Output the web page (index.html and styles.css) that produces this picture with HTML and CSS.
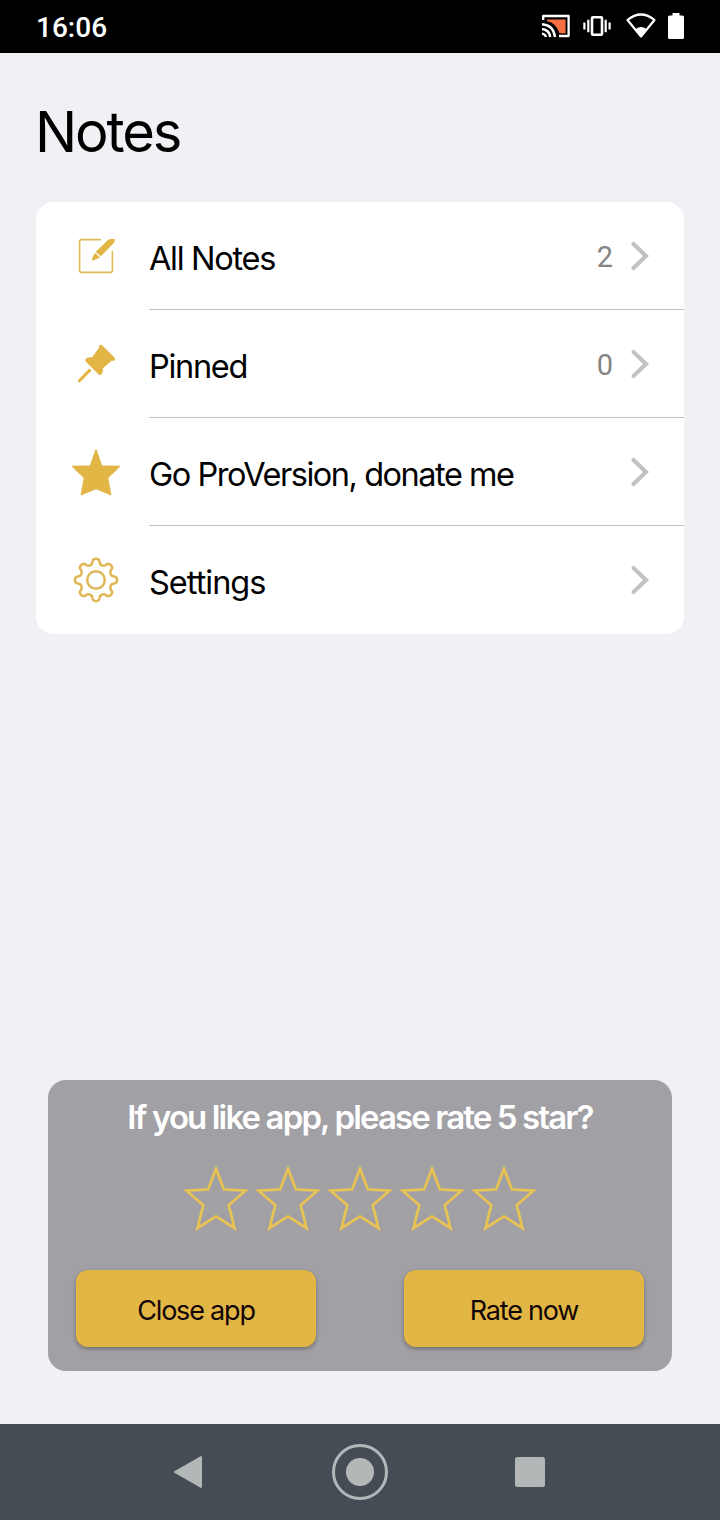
FILE: index.html
```html
<!DOCTYPE html>
<html lang="en">
<head>
<meta charset="utf-8">
<title>Notes</title>
<link rel="stylesheet" href="styles.css">
</head>
<body>
<div class="screen">
  <header class="status">
    <span class="clock">16:06</span>
    <svg class="status-icons" viewBox="540 0 150 53" fill="none">
      <path d="M543.2 20V16H568.6V36H559" stroke="#fff" stroke-width="2.3" stroke-linejoin="round"/>
      <path d="M547 19.5H565.6V33.3H559.5C557.5 27 553 22 547 21.2Z" fill="#f76f42"/>
      <path d="M542 24.2Q553.5 25 555 37M542 29Q549.5 30 550.3 37M542 33.6Q545.3 34.2 546 37" stroke="#fff" stroke-width="2.4"/>
      <rect x="592" y="17.2" width="10" height="17.6" rx="1" stroke="#fff" stroke-width="2.6"/>
      <path d="M588.3 19.8V32.2M605.7 19.8V32.2M584.4 22.5V29.5M609.6 22.5V29.5" stroke="#fff" stroke-width="2.2"/>
      <path d="M627.5 20Q641 9 654.5 20L641 36.5Z" stroke="#fff" stroke-width="2.2" stroke-linejoin="round"/>
      <path d="M635.2 29.4Q641 24.5 646.8 29.4L641 37Z" fill="#fff"/>
      <path d="M672.5 13H679.5V15.5H682.5Q684 15.5 684 17V37.5Q684 39 682.5 39H669.5Q668 39 668 37.5V17Q668 15.5 669.5 15.5H672.5Z" fill="#fff"/>
    </svg>
  </header>

  <main class="content">
    <h1 class="title">Notes</h1>
    <ul class="menu">
      <li class="item">
        <svg class="icon" viewBox="0 0 48 48">
          <path class="line thin" d="M29 7.6H9.5Q7.6 7.6 7.6 9.5V38.5Q7.6 40.4 9.5 40.4H38.5Q40.4 40.4 40.4 38.5V18.8"/>
          <path class="fill" d="M23.6 19.9L35.6 8.3Q37 7 39 7H42.8Q43 10 41.2 11.8L28.9 24.2ZM22.9 20.9L27.9 25.2Q24.5 27.6 20.6 28.5Q19.5 28.6 19.9 27.4Q21 23.8 22.9 20.9Z"/>
        </svg>
        <div class="row"><span class="label all">All Notes</span><span class="count">2</span><svg class="chevron" viewBox="0 0 24 32"><path d="M5.5 4L18 16L5.5 28"/></svg></div>
      </li>
      <li class="item">
        <svg class="icon" viewBox="0 0 48 48">
          <path class="fill" d="M27.1 7.6Q26.3 5.2 28.5 4.9Q29.6 4.7 30.6 5.7L42.5 17.6Q43.7 18.9 42.8 20.2Q41.6 21.4 39.9 20.6L30.8 28.2Q31.6 31 29.8 34Q28.2 36 26.4 34.3L13.6 21.5Q12.3 19.5 14.5 18.2Q17.2 16.7 20.2 17.3Z"/>
          <path class="needle" d="M17.6 30.4L7.4 40.8"/>
        </svg>
        <div class="row"><span class="label pinned">Pinned</span><span class="count">0</span><svg class="chevron" viewBox="0 0 24 32"><path d="M5.5 4L18 16L5.5 28"/></svg></div>
      </li>
      <li class="item">
        <svg class="icon" viewBox="0 0 48 48"><path class="fill rounded" d="M24 2L29.5 18L47.3 18.5L35.5 29.7L38.5 46.5L24 40.4L9.5 46.5L12.5 29.7L.7 18.5L18.5 18Z"/></svg>
        <div class="row"><span class="label pro">Go ProVersion, donate me</span><svg class="chevron" viewBox="0 0 24 32"><path d="M5.5 4L18 16L5.5 28"/></svg></div>
      </li>
      <li class="item">
        <svg class="icon" viewBox="0 0 48 48">
          <g transform="translate(24 24)" class="line">
            <circle r="8.8"/>
            <path d="M18.14 -3.61A3.67 3.67 0 0 1 18.14 3.61A3.95 3.95 0 0 0 15.38 10.28A3.67 3.67 0 0 1 10.28 15.38A3.95 3.95 0 0 0 3.61 18.14A3.67 3.67 0 0 1 -3.61 18.14A3.95 3.95 0 0 0 -10.28 15.38A3.67 3.67 0 0 1 -15.38 10.28A3.95 3.95 0 0 0 -18.14 3.61A3.67 3.67 0 0 1 -18.14 -3.61A3.95 3.95 0 0 0 -15.38 -10.28A3.67 3.67 0 0 1 -10.28 -15.38A3.95 3.95 0 0 0 -3.61 -18.14A3.67 3.67 0 0 1 3.61 -18.14A3.95 3.95 0 0 0 10.28 -15.38A3.67 3.67 0 0 1 15.38 -10.28A3.95 3.95 0 0 0 18.14 -3.61Z"/>
          </g>
        </svg>
        <div class="row"><span class="label settings">Settings</span><svg class="chevron" viewBox="0 0 24 32"><path d="M5.5 4L18 16L5.5 28"/></svg></div>
      </li>
    </ul>

    <section class="rate">
      <h2 class="question">If you like app, please rate 5 star?</h2>
      <div class="stars">
        <svg class="star" viewBox="0 0 72 72"><path d="M36 7L44 27.5L65.5 28.7L48.7 43.3L54.5 66.2L36 54.3L17.5 66.2L23.3 43.3L6.5 28.7L28 27.5Z"/></svg>
        <svg class="star" viewBox="0 0 72 72"><path d="M36 7L44 27.5L65.5 28.7L48.7 43.3L54.5 66.2L36 54.3L17.5 66.2L23.3 43.3L6.5 28.7L28 27.5Z"/></svg>
        <svg class="star" viewBox="0 0 72 72"><path d="M36 7L44 27.5L65.5 28.7L48.7 43.3L54.5 66.2L36 54.3L17.5 66.2L23.3 43.3L6.5 28.7L28 27.5Z"/></svg>
        <svg class="star" viewBox="0 0 72 72"><path d="M36 7L44 27.5L65.5 28.7L48.7 43.3L54.5 66.2L36 54.3L17.5 66.2L23.3 43.3L6.5 28.7L28 27.5Z"/></svg>
        <svg class="star" viewBox="0 0 72 72"><path d="M36 7L44 27.5L65.5 28.7L48.7 43.3L54.5 66.2L36 54.3L17.5 66.2L23.3 43.3L6.5 28.7L28 27.5Z"/></svg>
      </div>
      <div class="actions">
        <button class="button">Close app</button>
        <button class="button">Rate now</button>
      </div>
    </section>
  </main>

  <nav class="navbar">
    <svg class="nav-icons" viewBox="0 0 720 96">
      <path d="M175 48L201 33V63Z" stroke="#b3b7b8" stroke-width="2" stroke-linejoin="round"/>
      <circle cx="360" cy="48" r="14"/>
      <circle cx="360" cy="48" r="26.5" fill="none" stroke="#b3b7b8" stroke-width="3"/>
      <rect x="515" y="33" width="30" height="30" rx="2.5"/>
    </svg>
  </nav>
</div>
</body>
</html>
```
FILE: styles.css
```css
* { box-sizing: border-box; }
body { margin: 0; }
.screen {
  width: 720px;
  height: 1520px;
  display: flex;
  flex-direction: column;
  background: #f0f0f5;
  font-family: Inter, "Liberation Sans", sans-serif;
  color: #000;
}
.status {
  height: 53px;
  background: #000;
  display: flex;
  justify-content: space-between;
  align-items: center;
  padding: 0 30px 0 36px;
}
.clock {
  font: 500 28px/53px Roboto, sans-serif;
  padding-top: 2px;
  color: #fff;
}
.status-icons { width: 150px; height: 53px; display: block; }
.content {
  flex: 1;
  display: flex;
  flex-direction: column;
  padding: 0 36px 53px;
}
.title {
  margin: 0 0 0 -1px;
  height: 149px;
  padding-top: 44px;
  font-size: 56px;
  line-height: 70px;
  font-weight: 400;
  letter-spacing: -2.1px;
}
.menu {
  list-style: none;
  margin: 0;
  padding: 0;
  border-radius: 18px;
  background: #fff;
}
.item { height: 108px; display: flex; align-items: center; padding-left: 36px; }
.icon { width: 48px; height: 48px; margin-right: 29px; flex: none; }
.fill { fill: #e2b645; }
.rounded { stroke: #e2b645; stroke-width: 1.5; stroke-linejoin: round; }
.needle { fill: none; stroke: #e2b645; stroke-width: 3; stroke-linecap: round; }
.line { fill: none; stroke: #dfb756; stroke-width: 2.5; }
.thin { stroke-width: 1.6; stroke: #dcbb55; }
.row {
  flex: 1;
  height: 108px;
  display: flex;
  align-items: center;
  padding-right: 32px;
  border-bottom: 1px solid #c2c2c2;
}
.item:last-child .row { border-bottom-color: transparent; }
.label {
  flex: 1;
  font-size: 32.5px;
  line-height: 40px;
  padding-top: 7px;
  letter-spacing: -1px;
  white-space: nowrap;
}
.all, .pinned { letter-spacing: -1.3px; }
.pro { letter-spacing: -1.48px; }
.count { font: 400 29px/36px Roboto, sans-serif; color: #848484; margin-right: 15px; padding-top: 2px; }
.chevron { width: 24px; height: 32px; flex: none; }
.chevron path { fill: none; stroke: #c2c2c2; stroke-width: 4.2; stroke-linecap: round; }
.rate {
  margin: auto 12px 0;
  height: 291px;
  border-radius: 18px;
  background: #a1a0a5;
  padding: 16px 28px 24px;
}
.question {
  margin: 0;
  color: #fff;
  font-size: 33px;
  line-height: 42px;
  font-weight: 600;
  letter-spacing: -1.88px;
  text-align: center;
  white-space: nowrap;
}
.stars { display: flex; justify-content: center; margin-top: 24px; }
.star { width: 72px; height: 72px; }
.star path { fill: none; stroke: #e7c255; stroke-width: 2.8; }
.actions { display: flex; justify-content: space-between; margin-top: 36px; }
.button {
  width: 240px;
  height: 77px;
  border: 0;
  border-radius: 12px;
  background: #e2b645;
  box-shadow: 0 2px 4px rgba(0, 0, 0, .32);
  color: #120508;
  font: 400 27px/34px Inter, sans-serif;
  letter-spacing: -1.2px;
  padding: 5px 0 0;
}
.navbar { height: 96px; background: #444d53; }
.nav-icons { display: block; width: 720px; height: 96px; fill: #b3b7b8; }
```
